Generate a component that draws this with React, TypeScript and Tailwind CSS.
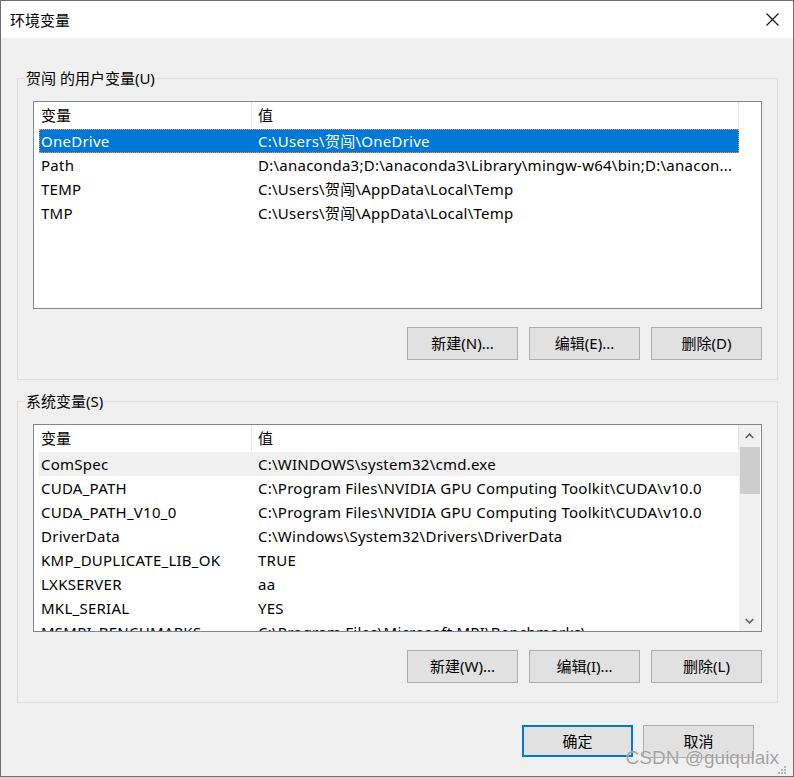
import React from "react";

type Row = [string, string];

const userVars: Row[] = [
  ["OneDrive", "C:\\Users\\贺闯\\OneDrive"],
  ["Path", "D:\\anaconda3;D:\\anaconda3\\Library\\mingw-w64\\bin;D:\\anacon..."],
  ["TEMP", "C:\\Users\\贺闯\\AppData\\Local\\Temp"],
  ["TMP", "C:\\Users\\贺闯\\AppData\\Local\\Temp"],
];

const systemVars: Row[] = [
  ["ComSpec", "C:\\WINDOWS\\system32\\cmd.exe"],
  ["CUDA_PATH", "C:\\Program Files\\NVIDIA GPU Computing Toolkit\\CUDA\\v10.0"],
  ["CUDA_PATH_V10_0", "C:\\Program Files\\NVIDIA GPU Computing Toolkit\\CUDA\\v10.0"],
  ["DriverData", "C:\\Windows\\System32\\Drivers\\DriverData"],
  ["KMP_DUPLICATE_LIB_OK", "TRUE"],
  ["LXKSERVER", "aa"],
  ["MKL_SERIAL", "YES"],
  ["MSMPI_BENCHMARKS", "C:\\Program Files\\Microsoft MPI\\Benchmarks\\"],
];

function Chevron({ up }: { up?: boolean }) {
  return (
    <svg width="9" height="6" viewBox="0 0 9 6">
      <polyline
        points={up ? "0.7,5 4.5,1.2 8.3,5" : "0.7,1 4.5,4.8 8.3,1"}
        fill="none"
        stroke="#606060"
        strokeWidth="1.6"
      />
    </svg>
  );
}

function Scrollbar() {
  return (
    <div className="flex w-[21px] flex-col bg-[#f0f0f0]">
      <div className="flex h-[21px] items-center justify-center">
        <Chevron up />
      </div>
      <div className="ml-px mt-px h-[47px] bg-[#cdcdcd]" />
      <div className="flex-1" />
      <div className="flex h-[21px] items-center justify-center">
        <Chevron />
      </div>
    </div>
  );
}

function ListView({
  rows,
  selected,
  hovered,
  scroll,
}: {
  rows: Row[];
  selected?: number;
  hovered?: number;
  scroll?: boolean;
}) {
  return (
    <div className="flex h-[208px] border border-[#828790] bg-white">
      <div className="w-[705px] overflow-hidden pl-[5px]">
        <div className="flex h-[27px] items-center pb-px">
          <div className="flex h-full w-[213px] items-center border-r border-[#e5e5e5] pl-[2px]">变量</div>
          <div className="flex h-full w-[487px] items-center border-r border-[#e5e5e5] pl-[6px]">值</div>
        </div>
        {rows.map(([name, value], i) => (
          <div
            key={name}
            className={
              i === selected
                ? "flex h-[24px] items-center bg-[#0078d7] pb-px tracking-[0.25px] text-white outline-1 outline-dotted -outline-offset-1 outline-[#ff9a3c]"
                : i === hovered
                  ? "flex h-[24px] items-center bg-[#f0f0f0] pb-px tracking-[0.25px]"
                  : "flex h-[24px] items-center pb-px tracking-[0.25px]"
            }
          >
            <div className="w-[213px] shrink-0 overflow-hidden whitespace-nowrap pl-[2px]">{name}</div>
            <div className="flex-1 overflow-hidden whitespace-nowrap pl-[6px]">{value}</div>
          </div>
        ))}
      </div>
      {scroll ? <Scrollbar /> : <div className="w-[21px]" />}
      <div className="w-px" />
    </div>
  );
}

function Btn({ children, primary }: { children: React.ReactNode; primary?: boolean }) {
  return (
    <button
      className={
        primary
          ? "h-[32px] w-[111px] border-2 border-[#0078d7] bg-[#e1e1e1] pb-px text-black"
          : "h-[33px] w-[111px] border border-[#adadad] bg-[#e1e1e1] pb-[2px] text-black"
      }
    >
      {children}
    </button>
  );
}

function Group({ label, children }: { label: string; children: React.ReactNode }) {
  return (
    <div className="relative h-[302px] border border-[#dcdcdc] px-[15px] pt-[22px]">
      <span className="absolute -top-[11px] left-[7px] bg-[#f0f0f0] px-px leading-[20px]">{label}</span>
      {children}
    </div>
  );
}

export default function App() {
  return (
    <div className="relative flex h-[777px] w-[794px] flex-col border border-[#6f6f6f] bg-[#f0f0f0] font-['Noto_Sans','Noto_Sans_CJK_SC',sans-serif] text-[15px] leading-[20px] text-black">
      <div className="flex h-[37px] shrink-0 items-center justify-between bg-white pl-[9px]">
        <span>环境变量</span>
        <div className="flex h-full w-[42px] items-center justify-center">
          <svg width="13" height="13" viewBox="0 0 13 13">
            <path d="M0.5 0.5 L12.5 12.5 M12.5 0.5 L0.5 12.5" stroke="#111" strokeWidth="1.1" />
          </svg>
        </div>
      </div>

      <div className="flex flex-col pl-[16px] pr-[15px] pt-[40px]">
        <Group label="贺闯 的用户变量(U)">
          <ListView rows={userVars} selected={0} />
          <div className="mt-[18px] flex justify-end gap-[11px]">
            <Btn>新建(N)...</Btn>
            <Btn>编辑(E)...</Btn>
            <Btn>删除(D)</Btn>
          </div>
        </Group>

        <div className="mt-[21px]">
          <Group label="系统变量(S)">
            <ListView rows={systemVars} hovered={0} scroll />
            <div className="mt-[18px] flex justify-end gap-[11px]">
              <Btn>新建(W)...</Btn>
              <Btn>编辑(I)...</Btn>
              <Btn>删除(L)</Btn>
            </div>
          </Group>
        </div>

        <div className="mt-[22px] flex justify-end gap-[10px] pr-[24px]">
          <Btn primary>确定</Btn>
          <Btn>取消</Btn>
        </div>
      </div>

      <span className="pointer-events-none absolute bottom-[6px] right-[14px] font-['Liberation_Sans',sans-serif] text-[19px] leading-[24px] text-[rgba(120,120,120,0.7)] [text-shadow:0_0_1px_#fff]">
        CSDN @guiqulaix
      </span>
      <svg className="absolute bottom-[2px] right-[7px]" width="8" height="8" viewBox="0 0 8 8">
        <rect x="6" y="0" width="2" height="2" fill="#b5b5b5" />
        <rect x="3" y="3" width="2" height="2" fill="#b5b5b5" />
        <rect x="6" y="3" width="2" height="2" fill="#b5b5b5" />
        <rect x="0" y="6" width="2" height="2" fill="#b5b5b5" />
        <rect x="3" y="6" width="2" height="2" fill="#b5b5b5" />
        <rect x="6" y="6" width="2" height="2" fill="#b5b5b5" />
      </svg>
    </div>
  );
}
